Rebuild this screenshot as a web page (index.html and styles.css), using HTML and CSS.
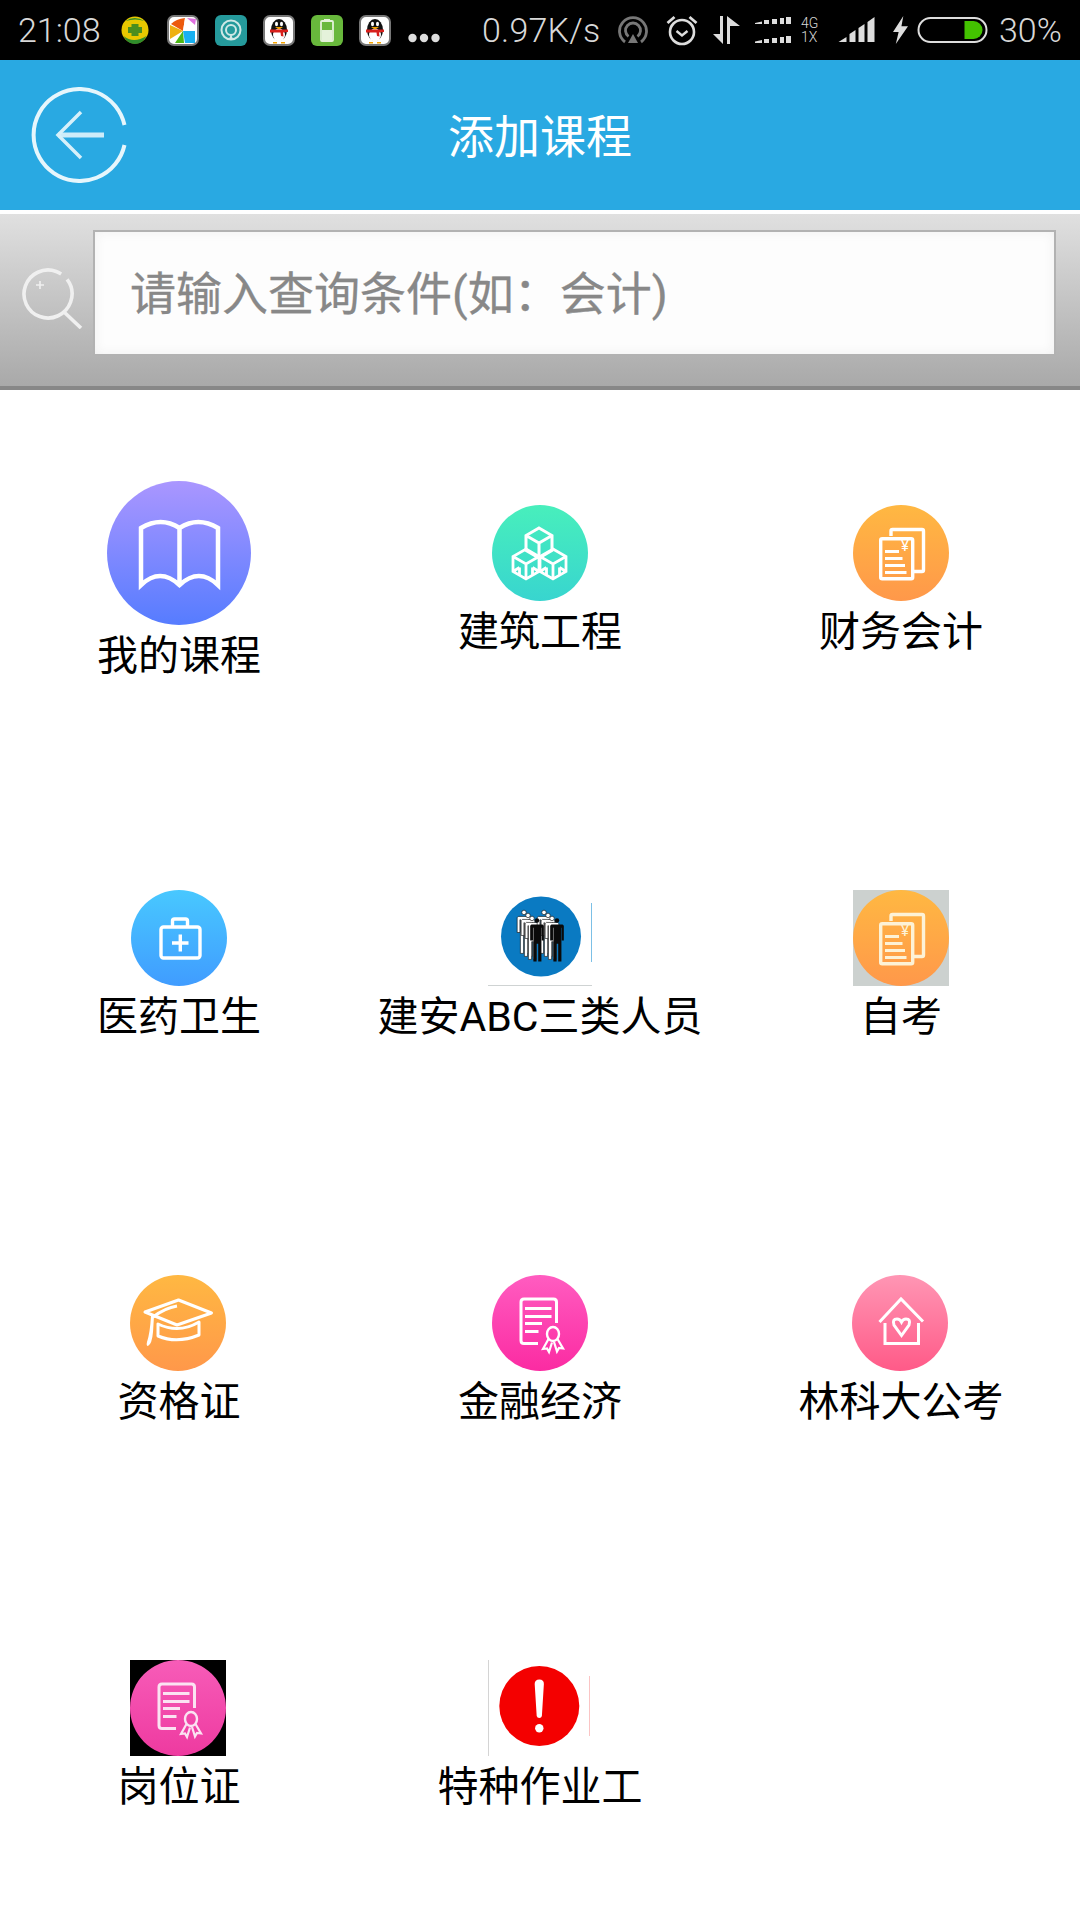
FILE: index.html
```html
<!DOCTYPE html>
<html lang="zh-CN">
<head>
<meta charset="utf-8">
<title>添加课程</title>
<link rel="stylesheet" href="styles.css">
</head>
<body>
<svg class="defs" width="0" height="0" aria-hidden="true">
  <defs>
    <symbol id="doc" viewBox="0 0 96 96">
      <g fill="none" stroke="currentColor" stroke-width="3.400">
        <path d="M38 31V26q0-1.500 1.500-1.500H69q1.500 0 1.500 1.500V65q0 1.500-1.500 1.500h-9"/>
        <rect x="27.700" y="33.700" width="32" height="40" rx="1.500"/>
        <path d="M32 46.500h14M32 53.500h17.500M32 60.500h20M32 67.500h21.500" stroke-width="3"/>
      </g>
      <text x="52" y="46" text-anchor="middle" class="yen">¥</text>
    </symbol>
    <symbol id="cert" viewBox="0 0 96 96">
      <g fill="none" stroke="currentColor">
        <path d="M46 68.500H32q-3 0-3-3V27q0-3 3-3h29.500q3 0 3 3V48" stroke-width="3"/>
        <path d="M33 33.500h26.500M33 41.500h26.500M33 48.500h17M33 56.500h13.500" stroke-width="3"/>
        <ellipse cx="61" cy="59" rx="6" ry="7" stroke-width="2.400"/>
        <path d="M56.500 64l-5.500 10 4-.5 2 3.500 3-9.500M65.500 64l5.500 9.500-4-.5-2 3.500-3-9.500" stroke-width="2.200"/>
      </g>
    </symbol>
    <symbol id="cube" viewBox="0 0 30 34">
      <path d="M15 2l13 7.500v15L15 32 2 24.500v-15zM2 9.500L15 17l13-7.500M15 17v15" fill="none" stroke="#fff" stroke-width="3"/>
    </symbol>
    <symbol id="cube-cut" viewBox="0 0 30 34">
      <path d="M15 2l13 7.500v15L15 32 2 24.500v-15zM2 9.500L15 17l13-7.500M15 17v15M8.500 20.500v8M21.500 20.500v8M2 24.500l6.500-4M28 24.500l-6.500-4" fill="none" stroke="#fff" stroke-width="2.800"/>
    </symbol>
    <symbol id="penguin" viewBox="0 0 32 31">
      <rect x="1" y="1" width="30" height="29" rx="6" fill="#fff" stroke="#777" stroke-width="2"/>
      <ellipse cx="16" cy="15" rx="8" ry="11" fill="#111"/>
      <ellipse cx="16" cy="20" rx="6" ry="6.500" fill="#fff"/>
      <ellipse cx="13.500" cy="9" rx="1.500" ry="2.200" fill="#fff"/>
      <ellipse cx="18.500" cy="9" rx="1.500" ry="2.200" fill="#fff"/>
      <path d="M12 12h8l-4 2.500z" fill="#f5a300"/>
      <path d="M7 14.500h18v2.500l-5 .5 .5 4-2.500-.5-.5-3.500H7z" fill="#d8201c"/>
      <path d="M10 27h4v1.500h-4zM18 27h4v1.500h-4z" fill="#f5a300"/>
    </symbol>
    <symbol id="person" viewBox="0 0 20 56" overflow="visible">
      <circle cx="10" cy="3" r="2.800"/>
      <path d="M3 8h14l1.500 1.500V28h-2.500V12h-.5v42h-4V32h-2v22h-4V12h-.5v16H1.500V9.500z"/>
    </symbol>
  </defs>
</svg>

<div class="page">
  <div class="status-bar">
    <span class="clock">21:08</span>
    <svg class="st-coin" width="28" height="28" viewBox="0 0 27 28"><circle cx="13.500" cy="14" r="13.500" fill="#e8c800"/><path d="M2 20q10 8 23 0-4 8-11.500 8T2 20z" fill="#2f8d2c"/><path d="M4 5q9-6 19 0-9-3-19 0z" fill="#2f8d2c"/><path d="M10 8h7v3h3.500v6H17v3h-7v-3H6.500v-6H10z" fill="#4b8e1e"/></svg>
    <svg width="32" height="31" viewBox="0 0 32 31"><rect x="1" y="1" width="30" height="29" rx="6" fill="#fff" stroke="#777" stroke-width="2"/><path d="M16 16L4 9q5-5 14-6z" fill="#ec5a0c"/><path d="M16 16L3 24V10z" fill="#eeb010"/><path d="M16 16L8 28h9z" fill="#4cb814"/><path d="M16 16l2 12h10V16z" fill="#18b0f0"/><path d="M16 16l2-13 10 6z" fill="#fff"/><path d="M20 3l8 7 1-6z" fill="#e070e0"/></svg>
    <svg width="32" height="31" viewBox="0 0 32 31"><rect width="32" height="31" rx="6" fill="#259a9c"/><circle cx="16" cy="15" r="9.500" fill="none" stroke="#cfe8e6" stroke-width="2"/><circle cx="16" cy="15" r="5" fill="none" stroke="#cfe8e6" stroke-width="2"/><path d="M14 24h4l-2-5z" fill="#cfe8e6"/></svg>
    <svg width="32" height="31"><use href="#penguin"/></svg>
    <svg width="32" height="31" viewBox="0 0 32 31"><rect width="32" height="31" rx="6" fill="#68b83c"/><rect x="10" y="6" width="12" height="20" rx="1" fill="none" stroke="#e4f2da" stroke-width="1.800"/><rect x="13" y="4" width="6" height="2" fill="#e4f2da"/><rect x="11" y="15" width="10" height="10" fill="#e4f2da"/></svg>
    <svg width="32" height="31"><use href="#penguin"/></svg>
    <svg class="st-dots" width="32" height="10" viewBox="0 0 32 10"><circle cx="4.500" cy="5" r="4.200" fill="#ddd"/><circle cx="16" cy="5" r="4.200" fill="#ddd"/><circle cx="27.500" cy="5" r="4.200" fill="#ddd"/></svg>
    <span class="speed">0.97K/s</span>
    <svg class="st-hotspot" width="30" height="31" viewBox="0 0 30 31"><g fill="none" stroke="#777" stroke-width="2.800"><path d="M7 27A13.500 13.500 0 1 1 23 27"/><path d="M10.500 21.500a7.500 7.500 0 1 1 9 0"/></g><path d="M15 19l5 9H10z" fill="#777"/></svg>
    <svg width="32" height="32" viewBox="0 0 31 32"><circle cx="15.500" cy="18" r="12" fill="none" stroke="#ddd" stroke-width="2.600"/><path d="M10 17l5.500 4.500L21 17" fill="none" stroke="#ddd" stroke-width="2.400"/><path d="M1 9l7-6M30 9l-7-6" stroke="#ddd" stroke-width="2.800"/></svg>
    <svg class="st-near" width="27" height="28" viewBox="0 0 27 28"><path d="M7 0h3v28L0 18h7zM14 0v28h3V10h10z" fill="#ddd"/></svg>
    <svg class="st-near" width="37" height="27" viewBox="0 0 37 27"><path d="M0 7h7V4.500L0 6zM9 7h5V3h-5zM17 7h5V2h-5zM25 7h4V1h-4zM31 7h5V0h-5zM0 26h7v-3l-7 1.500zM9 26h5v-4h-5zM17 26h5v-5h-5zM25 26h4v-6h-4zM31 26h5v-7h-5z" fill="#ddd"/></svg>
    <span class="net"><span>4G</span><span>1X</span></span>
    <svg class="st-wide" width="37" height="26" viewBox="0 0 36 26"><path d="M0 25l8-5v5zM11 25v-8l6-4v12zM20 25V11l6-4v18zM29 25V5l7-5v25z" fill="#ddd"/></svg>
    <svg class="st-wide" width="15" height="30" viewBox="0 0 16 30"><path d="M11 0L0 17h6L3 30l13-19H9z" fill="#ddd"/></svg>
    <svg class="st-tight" width="71" height="26" viewBox="0 0 70 26"><rect x="1" y="1" width="68" height="24" rx="12" fill="none" stroke="#ddd" stroke-width="2"/><path d="M47 4h9a9 9 0 0 1 0 18h-9z" fill="#43c200"/></svg>
    <span class="percent">30%</span>
  </div>

  <header class="title-bar">
    <svg class="back" width="96" height="96" viewBox="0 0 96 96"><path d="M93.500 38A46 46 0 1 0 93.500 58" fill="none" stroke="#e6f6fc" stroke-width="4"/><path d="M27 48h46" fill="none" stroke="#cdecf9" stroke-width="5"/><path d="M50 25L27 48l23 23" fill="none" stroke="#d6f0fa" stroke-width="3.500"/></svg>
    <h1 class="title">添加课程</h1>
  </header>

  <div class="search-bar">
    <svg class="lens" width="62" height="62" viewBox="0 0 62 62"><circle cx="27" cy="27" r="24" fill="none" stroke="#f0f0f0" stroke-width="3.600" stroke-dasharray="118 8" transform="rotate(20 27 27)"/><path d="M43 45l17 16" stroke="#f0f0f0" stroke-width="3.600"/><path d="M15 18h8M19 14v8" stroke="#f0f0f0" stroke-width="1.600"/></svg>
    <div class="search-input">请输入查询条件(如：会计)</div>
  </div>

  <main class="grid">
    <div class="cell">
      <div class="disc disc-large g-purple"><svg width="144" height="144" viewBox="0 0 144 144"><path d="M34 47Q54 35 72.500 47 91 35 111 47v57Q92 86 72.500 104 53 86 34 104zM72.500 47v57" fill="none" stroke="#fff" stroke-width="4.500"/></svg></div>
      <span class="label">我的课程</span>
    </div>
    <div class="cell">
      <div class="disc g-teal"><svg width="96" height="96" viewBox="0 0 96 96"><use href="#cube" x="32" y="21" width="30" height="34"/><use href="#cube-cut" x="19" y="42" width="30" height="34"/><use href="#cube-cut" x="46" y="42" width="30" height="34"/></svg></div>
      <span class="label">建筑工程</span>
    </div>
    <div class="cell">
      <div class="disc g-orange"><svg class="ink-white" width="96" height="96"><use href="#doc"/></svg></div>
      <span class="label">财务会计</span>
    </div>

    <div class="cell">
      <div class="disc g-blue"><svg width="96" height="96" viewBox="0 0 96 96"><g fill="none" stroke="#fff" stroke-width="3.400"><rect x="30" y="37" width="39" height="31" rx="2.500"/><path d="M41.500 37v-6q0-2 2-2h11q2 0 2 2v6"/><path d="M41 53h16.500M49.300 44.500v17"/></g></svg></div>
      <span class="label">医药卫生</span>
    </div>
    <div class="cell">
      <svg class="picture" width="104" height="96" viewBox="0 0 104 96">
        <path d="M0 95.500h104" stroke="#cfd3d3"/><path d="M103.500 13v59" stroke="#7cc0e6"/>
        <circle cx="53" cy="46.500" r="40" fill="#0a7ac2"/>
        <g fill="#fff" stroke="#111" stroke-width=".8">
          <use href="#person" x="27" y="20" width="18" height="45"/>
          <use href="#person" x="31" y="23" width="18" height="45"/>
          <use href="#person" x="35" y="26" width="18" height="45"/>
          <use href="#person" x="47" y="20" width="18" height="45"/>
          <use href="#person" x="51" y="23" width="18" height="45"/>
          <use href="#person" x="55" y="26" width="18" height="45"/>
        </g>
        <g fill="#0a0a0a">
          <use href="#person" x="40" y="28" width="18" height="45"/>
          <use href="#person" x="60" y="28" width="18" height="45"/>
        </g>
      </svg>
      <span class="label">建安ABC三类人员</span>
    </div>
    <div class="cell">
      <div class="tile tile-grey"><div class="disc g-orange"><svg class="ink-cream" width="96" height="96"><use href="#doc"/></svg></div></div>
      <span class="label">自考</span>
    </div>

    <div class="cell">
      <div class="disc disc-nudge g-orange"><svg width="96" height="96" viewBox="0 0 96 96"><g fill="none" stroke="#fff" stroke-width="3" stroke-linejoin="round"><path d="M48.500 25l33 13L47 50 15 37z"/><path d="M28 49v12q19 8 41-1V47q-20 12-41 2z"/><path d="M23 42q12-9 24-11"/></g><path d="M15 37l9 4-1 16q-1 12-5 14-2 0-1-4 3-9 4-26z" fill="#fff"/></svg></div>
      <span class="label">资格证</span>
    </div>
    <div class="cell">
      <div class="disc g-pink"><svg class="ink-white" width="96" height="96"><use href="#cert"/></svg></div>
      <span class="label">金融经济</span>
    </div>
    <div class="cell">
      <div class="disc disc-nudge g-rose"><svg width="96" height="96" viewBox="0 0 96 96"><g fill="none" stroke="#fff" stroke-width="3"><path d="M27.500 47L49 24l22 22.500M33 48v20.500h33.500V48"/><path d="M49.500 60.500L42 50q-2-6 3-6 3 0 4.500 3 1.500-3 4.500-3 5 0 3 6z"/></g></svg></div>
      <span class="label">林科大公考</span>
    </div>

    <div class="cell">
      <div class="tile tile-black disc-nudge"><div class="disc g-magenta"><svg class="ink-pale" width="96" height="96"><use href="#cert"/></svg></div></div>
      <span class="label">岗位证</span>
    </div>
    <div class="cell">
      <svg class="picture" width="104" height="96" viewBox="0 0 104 96">
        <path d="M.5 0v97" stroke="#d4d4d4"/><path d="M101.500 16v60" stroke="#fbc4c4"/>
        <circle cx="51.300" cy="46" r="40" fill="#f40000"/>
        <path d="M46.700 24q0-4.500 4.600-4.500t4.600 4.500l-2 32q-.5 2-2.600 2t-2.600-2z" fill="#fff"/>
        <circle cx="51.300" cy="68.300" r="4.200" fill="#fff"/>
      </svg>
      <span class="label">特种作业工</span>
    </div>
  </main>
</div>
</body>
</html>
```

FILE: styles.css
```css
* {
  box-sizing: border-box;
}

html,
body {
  margin: 0;
  padding: 0;
  background: #fff;
}

body {
  width: 1080px;
  height: 1920px;
  overflow: hidden;
  font-family: Roboto, "Noto Sans CJK SC", sans-serif;
}

.defs {
  display: block;
  height: 0;
}

.page {
  display: flex;
  flex-direction: column;
  height: 1920px;
}

/* status bar */
.status-bar {
  display: flex;
  align-items: center;
  gap: 16px;
  flex: 0 0 60px;
  padding-left: 18px;
  background: #000;
  color: #d8d8d8;
  font-size: 34px;
  font-weight: 300;
  line-height: 60px;
  white-space: nowrap;
}

.clock {
  width: 82px;
}

.st-coin {
  margin-left: 5px;
  margin-right: 2px;
}

.st-dots {
  align-self: flex-start;
  margin-top: 33px;
  margin-left: 1px;
}

.speed {
  width: 116px;
  margin-left: 26px;
  letter-spacing: .2px;
}

.st-hotspot {
  margin-left: 4px;
  margin-right: 2px;
}

.st-near {
  margin-left: -1px;
}

.net {
  display: flex;
  flex-direction: column;
  width: 19px;
  margin-left: -7px;
  font-size: 14px;
  line-height: 14px;
}

.st-wide {
  margin-left: 2px;
}

.st-tight {
  margin-left: -7px;
}

.percent {
  margin-left: -5px;
}

/* title bar */
.title-bar {
  position: relative;
  display: flex;
  align-items: center;
  justify-content: center;
  flex: 0 0 150px;
  background: #29a9e2;
}

.back {
  position: absolute;
  left: 31px;
  top: 27px;
}

.title {
  margin: 5px 0 0;
  color: #fff;
  font-size: 46px;
  font-weight: 400;
  line-height: 1.2;
}

/* search */
.search-bar {
  display: flex;
  align-items: flex-start;
  gap: 10px;
  flex: 0 0 180px;
  padding: 16px 24px 0 20px;
  border-top: 4px solid #fff;
  border-bottom: 4px solid #878787;
  background: linear-gradient(#e0e0e0, #a9a9a9);
}

.lens {
  flex: none;
  margin: 37px 0 0 1px;
}

.search-input {
  flex: 1;
  height: 126px;
  padding-left: 35px;
  border: 2px solid #b2b2b2;
  background: #fdfdfd;
  box-shadow: inset 0 0 12px #f0f0f0;
  color: #888;
  font-size: 46px;
  line-height: 125px;
  -webkit-text-stroke: .3px #888;
}

/* course grid */
.grid {
  display: grid;
  grid-template-columns: repeat(3, 360px);
  grid-auto-rows: 385px;
  column-gap: 1px;
  margin: 0 -1px;
}

.cell {
  display: flex;
  flex-direction: column;
  align-items: center;
  padding-top: 91px;
}

.label {
  color: #000;
  font-size: 41px;
  line-height: 63px;
  white-space: nowrap;
}

.disc {
  display: block;
  width: 96px;
  height: 96px;
  margin-top: 24px;
  border-radius: 50%;
}

.disc svg {
  display: block;
}

.disc-large {
  width: 144px;
  height: 144px;
  margin-top: 0;
}

.disc-nudge {
  margin-right: 2px;
}

.tile {
  width: 96px;
  height: 96px;
  margin-top: 24px;
}

.tile .disc {
  margin-top: 0;
}

.tile-grey {
  background: #ccd1cf;
}

.tile-black {
  background: #000;
}

.picture {
  display: block;
  margin-top: 24px;
}

.g-purple {
  background: linear-gradient(#aa96ff, #567cff);
}

.g-teal {
  background: linear-gradient(#48efbc, #38d5cf);
}

.g-orange {
  background: linear-gradient(#ffb842, #ff984a);
}

.g-blue {
  background: linear-gradient(#48c8ff, #409cff);
}

.g-pink {
  background: linear-gradient(#ff5cc0, #fb2ba2);
}

.g-rose {
  background: linear-gradient(#ff96b4, #ff5a88);
}

.g-magenta {
  background: linear-gradient(#f75cb8, #ee3aa0);
}

.ink-white {
  color: #fff;
}

.ink-cream {
  color: #fdf2d6;
}

.ink-pale {
  color: #fbe3f2;
}

.yen {
  fill: currentColor;
  font-family: Roboto, sans-serif;
  font-size: 15px;
}
```
